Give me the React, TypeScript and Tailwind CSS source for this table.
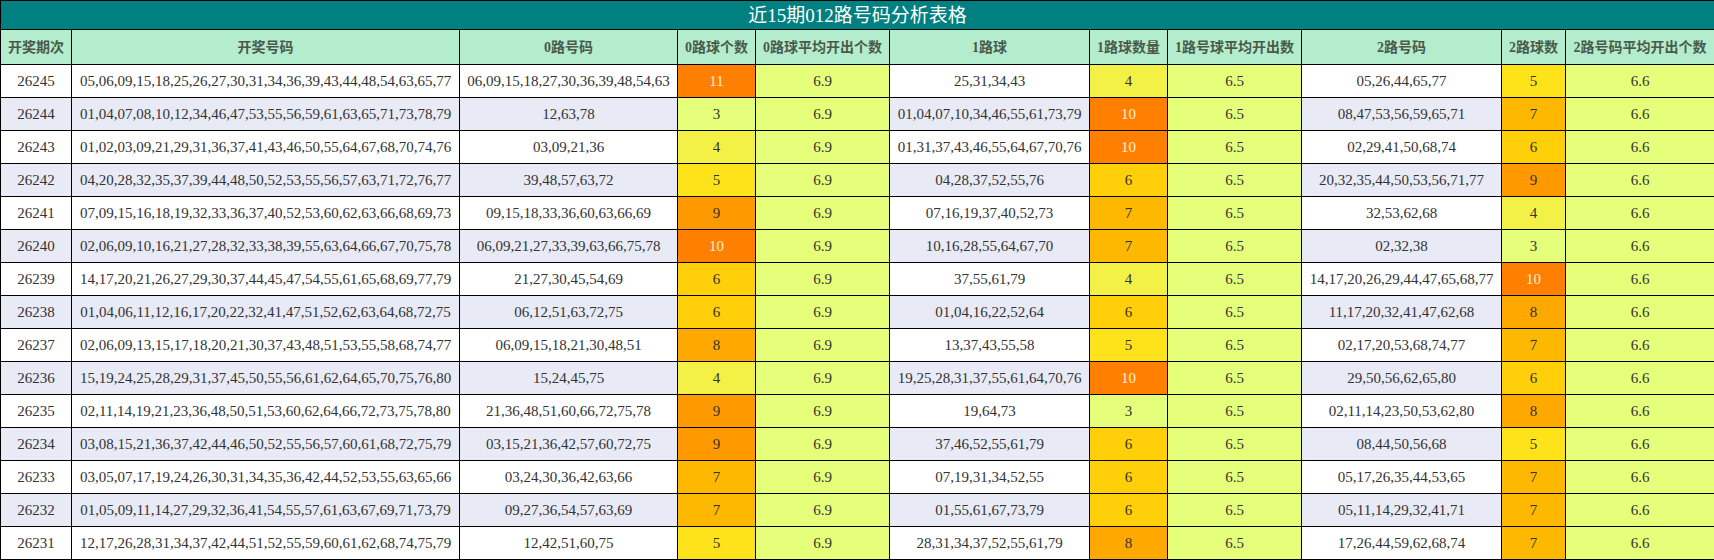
const draws: [string, string][] = [
    ['26245', '05,06,09,15,18,25,26,27,30,31,34,36,39,43,44,48,54,63,65,77'],
    ['26244', '01,04,07,08,10,12,34,46,47,53,55,56,59,61,63,65,71,73,78,79'],
    ['26243', '01,02,03,09,21,29,31,36,37,41,43,46,50,55,64,67,68,70,74,76'],
    ['26242', '04,20,28,32,35,37,39,44,48,50,52,53,55,56,57,63,71,72,76,77'],
    ['26241', '07,09,15,16,18,19,32,33,36,37,40,52,53,60,62,63,66,68,69,73'],
    ['26240', '02,06,09,10,16,21,27,28,32,33,38,39,55,63,64,66,67,70,75,78'],
    ['26239', '14,17,20,21,26,27,29,30,37,44,45,47,54,55,61,65,68,69,77,79'],
    ['26238', '01,04,06,11,12,16,17,20,22,32,41,47,51,52,62,63,64,68,72,75'],
    ['26237', '02,06,09,13,15,17,18,20,21,30,37,43,48,51,53,55,58,68,74,77'],
    ['26236', '15,19,24,25,28,29,31,37,45,50,55,56,61,62,64,65,70,75,76,80'],
    ['26235', '02,11,14,19,21,23,36,48,50,51,53,60,62,64,66,72,73,75,78,80'],
    ['26234', '03,08,15,21,36,37,42,44,46,50,52,55,56,57,60,61,68,72,75,79'],
    ['26233', '03,05,07,17,19,24,26,30,31,34,35,36,42,44,52,53,55,63,65,66'],
    ['26232', '01,05,09,11,14,27,29,32,36,41,54,55,57,61,63,67,69,71,73,79'],
    ['26231', '12,17,26,28,31,34,37,42,44,51,52,55,59,60,61,62,68,74,75,79'],
];

// split a draw into its 0 / 1 / 2 roads (remainder of n / 3)
const roads = (nums: string) => {
    const list = nums.split(',');
    return [0, 1, 2].map((r) => list.filter((n) => Number(n) % 3 === r));
};

// heat colour for the count cells
const heat = (n: number) => {
    if (n <= 3) return 'bg-[#e5ff7a] text-[#333]';
    if (n === 4) return 'bg-[#f3f145] text-[#333]';
    if (n === 5) return 'bg-[#ffe31a] text-[#333]';
    if (n === 6) return 'bg-[#ffcf0a] text-[#333]';
    if (n === 7) return 'bg-[#ffb800] text-[#333]';
    if (n === 8) return 'bg-[#ffa800] text-[#333]';
    if (n === 9) return 'bg-[#ff9900] text-[#333]';
    return 'bg-[#ff8000] text-[#ffeedd]';
};

const headers = [
    '开奖期次', '开奖号码', '0路号码', '0路球个数', '0路球平均开出个数',
    '1路球', '1路球数量', '1路号球平均开出数', '2路号码', '2路球数', '2路号码平均开出个数',
];

const widths = [
    'w-[71px]', 'w-[388px]', 'w-[218px]', 'w-[78px]', 'w-[134px]',
    'w-[200px]', 'w-[78px]', 'w-[134px]', 'w-[200px]', 'w-[64px]', 'w-[149px]',
];

const avgs = ['6.9', '6.5', '6.6'];

export default function App() {
    return (
        <div className="w-[1714px] bg-white font-['Liberation_Serif','Noto_Sans_CJK_SC',serif]">
            <table className="w-full table-fixed border-collapse text-center">
                <colgroup>
                    {widths.map((w, i) => <col key={i} className={w} />)}
                </colgroup>
                <thead>
                    <tr>
                        <th colSpan={11} className="h-[29px] border border-black bg-[#008080] p-0 text-[19px] font-normal leading-none text-white">
                            近15期012路号码分析表格
                        </th>
                    </tr>
                    <tr>
                        {headers.map((h) => (
                            <th key={h} className="h-[35px] border border-black bg-[#b4edcd] p-0 text-[14px] font-bold whitespace-nowrap text-[#4a5a4a]">
                                {h}
                            </th>
                        ))}
                    </tr>
                </thead>
                <tbody>
                    {draws.map(([issue, nums], idx) => {
                        const rowBg = idx % 2 === 0 ? 'bg-white' : 'bg-[#e8eaf6]';
                        const cell = `h-[33px] border border-black p-0 text-[15px] text-[#333] ${rowBg}`;
                        const parts = roads(nums);
                        return (
                            <tr key={issue}>
                                <td className={cell}>{issue}</td>
                                <td className={cell}>{nums}</td>
                                {parts.flatMap((p, r) => [
                                    <td key={`n${r}`} className={cell}>{p.join(',')}</td>,
                                    <td key={`c${r}`} className={`h-[33px] border border-black p-0 text-[15px] ${heat(p.length)}`}>{p.length}</td>,
                                    <td key={`a${r}`} className="h-[33px] border border-black bg-[#e5ff7a] p-0 text-[15px] text-[#333]">{avgs[r]}</td>,
                                ])}
                            </tr>
                        );
                    })}
                </tbody>
            </table>
        </div>
    );
}
